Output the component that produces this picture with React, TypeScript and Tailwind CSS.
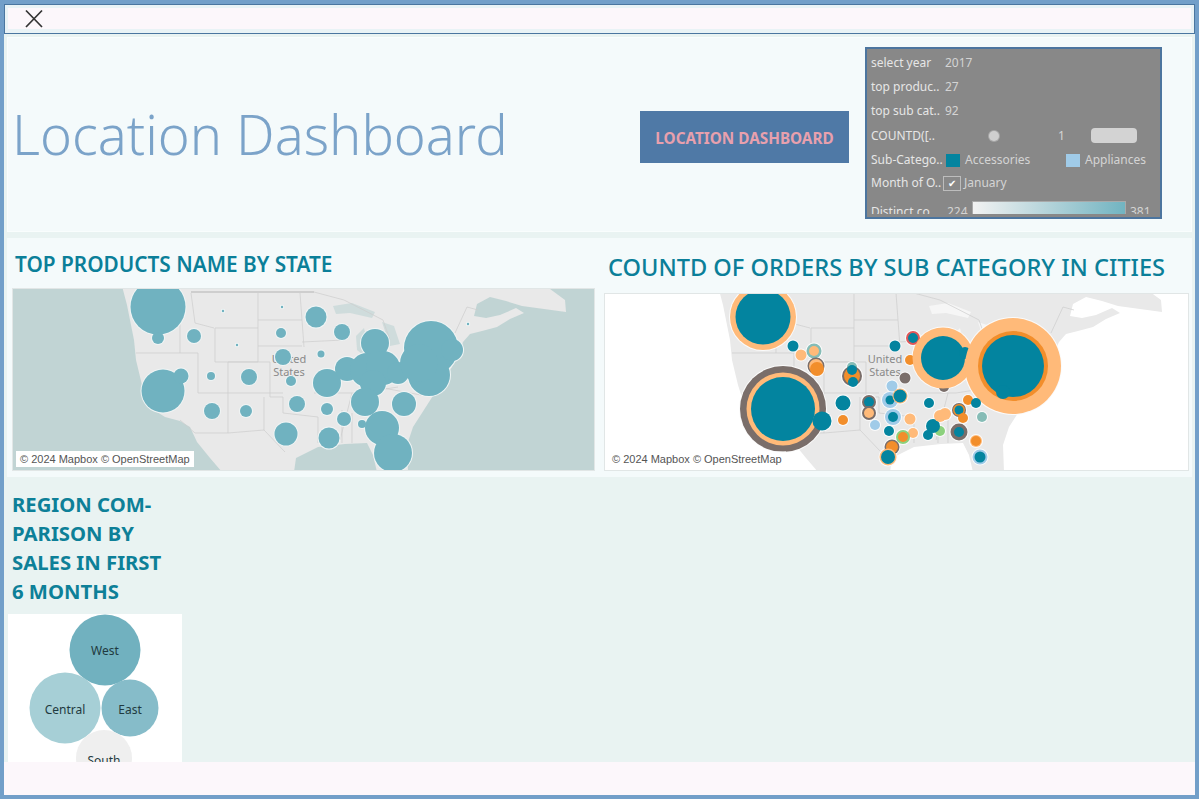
const teal = "#03849f";
const peach = "#ffba79";
const orange = "#f28e2b";
const grey = "#7a6e6a";
const sky = "#a0cbe8";
const sage = "#86bcb6";
const green = "#8cd17d";
const red = "#e15759";

type Dot = [number, number, number, string?];

// screen coordinates, the viewBox of each map is the map's own place on the page
const stateDots: Dot[] = [
  [158, 307, 27.5], [158, 338, 6], [194, 336, 7], [223, 311, 1.2], [282, 307, 1.2], [316, 317, 10.5],
  [342, 332, 8], [281, 333, 5], [237, 345, 1.2], [283, 357, 8], [321, 354, 3.5], [468, 324, 1.2],
  [163, 391, 21.5], [181, 376, 7.5], [211, 376, 4], [249, 377, 8], [291, 381, 5], [327, 383, 14],
  [347, 369, 12], [375, 343, 14], [367, 370, 17], [383, 368, 17], [373, 383, 13], [398, 373, 11],
  [365, 402, 14], [404, 404, 12], [212, 411, 8], [246, 411, 6], [297, 404, 8], [327, 409, 6],
  [344, 419, 7], [362, 424, 4], [286, 434, 11.5], [329, 438, 10.5], [382, 428, 17], [393, 453, 19],
  [431, 348, 27], [429, 375, 21], [452, 350, 11], [419, 363, 19],
];

const cityDots: Dot[] = [
  [763, 317, 33, peach], [763, 317, 27.5, teal],
  [783, 409, 43, grey], [783, 409, 36.5, peach], [783, 409, 32, teal], [822, 421, 9.5, teal],
  [793, 346, 5.5, teal], [801, 355, 5.5, peach], [814, 351, 7.5, sage], [814, 351, 5, peach],
  [816, 366, 8.5, grey], [816, 366, 7, peach], [817, 369, 7, orange],
  [852, 367, 5, sage], [852, 376, 10, grey], [852, 376, 8, orange], [852, 370, 5, teal], [853, 382, 5, teal],
  [895, 346, 5.5, teal], [913, 338, 7, red], [913, 338, 5, teal], [910, 360, 5, orange], [905, 378, 5.5, grey],
  [944, 387, 5, grey], [943, 358, 30.5, peach], [943, 358, 22, teal], [965, 353, 6, teal],
  [1013, 366, 48, peach], [1013, 366, 35, orange], [1013, 366, 31, teal], [1003, 392, 7, teal],
  [892, 386, 5.5, sky], [890, 400, 8, sky], [890, 400, 4.5, teal], [900, 396, 7.5, peach], [900, 396, 6.5, teal],
  [843, 403, 7.5, teal], [843, 420, 5, orange],
  [869, 402, 7, grey], [869, 402, 5, teal], [869, 413, 7, grey], [869, 413, 5, peach],
  [893, 417, 8, sky], [893, 417, 5, teal], [875, 425, 5, sky], [889, 431, 5, teal],
  [910, 419, 5.5, peach], [913, 433, 5, peach], [903, 437, 7, green], [903, 437, 5, orange],
  [892, 447, 7.5, grey], [892, 447, 6, orange], [888, 457, 8.5, peach], [888, 457, 7, teal],
  [929, 403, 5, teal], [940, 431, 5, green], [933, 426, 7, teal], [928, 435, 5, teal],
  [940, 416, 6, peach], [945, 414, 6, peach], [959, 410, 7, grey], [959, 410, 6, orange], [959, 410, 4.5, teal],
  [963, 418, 5, orange], [959, 432, 8.5, grey], [959, 432, 5, teal], [968, 400, 5, orange], [976, 403, 5, teal],
  [982, 417, 5, sage], [976, 441, 6, peach], [976, 441, 5, orange], [980, 457, 7.5, sky], [980, 457, 5.5, teal],
];

const landPath =
  "M122 286 L127 305 L134 340 L136 360 L142 385 L149 407 L165 417 L180 421 L190 427 L197 442 L210 458 L222 472 L294 472 L296 458 L318 447 L345 444 L367 443 L373 455 L377 472 L408 472 L407 445 L413 427 L429 402 L440 385 L452 367 L463 342 L470 334 L482 331 L497 327 L510 319 L524 313 L516 308 L500 315 L486 318 L474 316 L477 304 L490 297 L506 301 L522 306 L566 312 L565 300 L546 286 Z";

const stateLines =
  "M136 353 L198 353 M198 353 L198 393 M215 328 L258 328 L258 362 L215 362 L215 328 M228 362 L270 362 L270 397 M228 362 L228 433 M198 393 L283 393 M180 420 L195 433 L228 433 L264 430 L264 397 M258 320 L302 320 M258 346 L302 346 M258 293 L258 328 M300 293 L304 347 M270 397 L283 397 L283 413 L318 417 L318 443 M264 430 L285 452 M302 342 L344 340 M314 393 L360 393 L398 387 M352 393 L340 440 M342 410 L342 443 M352 413 L352 443 M191 293 L195 323 L214 328 M180 323 L180 353 M314 292 L344 300 L383 320 L390 340 M455 333 L467 307 L478 310 M383 388 L421 395";

// land and borders are the same on both maps, only shifted
function MapBase({ dx }: { dx: number }) {
  return (
    <g transform={`translate(${dx} 0)`}>
      <path d={landPath} fill="#e9e9e9" />
      <path
        d="M333 306 L352 303 L375 312 L372 318 L350 313 L336 314 Z M356 336 L364 328 L368 345 L362 354 L357 350 Z M382 322 L394 326 L400 344 L390 346 L386 334 Z"
        fill={dx === 0 ? "#cfdcdc" : "#f6f6f6"}
      />
      <path d="M191 292 L314 292" fill="none" stroke="#c4c4c4" strokeWidth="1.4" />
      <path d={stateLines} fill="none" stroke="#cdcdcd" strokeWidth="0.7" />
      <text x="289" y="363" textAnchor="middle" className="font-['Noto_Sans',sans-serif] text-[11px]" fill="#8a8a8a">United</text>
      <text x="289" y="376" textAnchor="middle" className="font-['Noto_Sans',sans-serif] text-[11px]" fill="#8a8a8a">States</text>
    </g>
  );
}

// halo goes under every dot first so that touching dots merge into one shape
function Dots({ dots, halo, fill }: { dots: Dot[]; halo: string; fill?: string }) {
  return (
    <>
      {dots.map(([x, y, r], i) => (
        <circle key={i} cx={x} cy={y} r={r + 1} fill={halo} />
      ))}
      {dots.map(([x, y, r, c], i) => (
        <circle key={i} cx={x} cy={y} r={r} fill={c ?? fill} />
      ))}
    </>
  );
}

function Attribution({ boxed }: { boxed: boolean }) {
  return (
    <div className={`absolute bottom-[3px] left-[3px] h-[16px] px-[4px] font-['Liberation_Sans',sans-serif] text-[11px] leading-[16px] text-[#555] whitespace-nowrap ${boxed ? "bg-white" : "bg-white/60"}`}>
      © 2024 Mapbox © OpenStreetMap
    </div>
  );
}

function FilterRow({ label, height, children }: { label: string; height: string; children: React.ReactNode }) {
  return (
    <div className={`flex items-center ${height}`}>
      <span className="w-[78px] shrink-0 pl-[4px] text-[#e6e6e6] whitespace-nowrap">{label}</span>
      {children}
    </div>
  );
}

function FilterPanel() {
  return (
    <div className="h-[172px] w-[297px] border-2 border-[#4c759f] bg-[#888888] pt-[2px] font-['Noto_Sans',sans-serif] text-[12px]">
      <div className="h-[163px] overflow-hidden text-[#d4d4d4]">
        <FilterRow label="select year" height="h-[24px]"><span>2017</span></FilterRow>
        <FilterRow label="top produc.." height="h-[24px]"><span>27</span></FilterRow>
        <FilterRow label="top sub cat.." height="h-[24px]"><span>92</span></FilterRow>
        <FilterRow label="COUNTD([.." height="h-[25px]">
          <span className="ml-[44px] h-[10px] w-[10px] rounded-full bg-[#cfcfcf] ring-1 ring-[#a8a8a8]" />
          <span className="ml-[59px]">1</span>
          <span className="ml-[26px] h-[15px] w-[46px] rounded-[4px] bg-[#d3d3d3]" />
        </FilterRow>
        <FilterRow label="Sub-Catego.." height="h-[24px]">
          <span className="ml-[1px] h-[13px] w-[14px] bg-[#03849f]" />
          <span className="ml-[5px] w-[101px]">Accessories</span>
          <span className="h-[13px] w-[14px] bg-[#a0cbe8]" />
          <span className="ml-[5px]">Appliances</span>
        </FilterRow>
        <FilterRow label="Month of O.." height="h-[22px]">
          <span className="-ml-[2px] flex h-[15px] w-[18px] items-center justify-center border border-[#bdbdbd] text-[10px] leading-none text-white">✔</span>
          <span className="ml-[3px]">January</span>
        </FilterRow>
        <div className="flex h-[33px] items-start leading-[16px]">
          <span className="w-[78px] shrink-0 pl-[4px] pt-[10px] text-[#e6e6e6] whitespace-nowrap">Distinct co..</span>
          <span className="ml-[2px] w-[25px] pt-[10px]">224</span>
          <span className="mt-[7px] h-[14px] w-[154px] border border-[#a9a9a9] bg-gradient-to-r from-[#f2f2f2] to-[#71b4c1]" />
          <span className="ml-[4px] pt-[10px]">381</span>
        </div>
      </div>
    </div>
  );
}

export default function App() {
  return (
    <div className="flex h-[799px] w-[1199px] flex-col overflow-hidden bg-[#729fc9] p-[4px]">
      <div className="flex h-[30px] shrink-0 items-stretch border border-[#4a76a0] bg-[#e9f3f6] px-[3px] pb-[4px] pt-[3px]">
        <div className="flex flex-1 items-center bg-[#fcf7fb] pl-[16px]">
          <svg width="20" height="20" viewBox="0 0 20 20" fill="none" stroke="#333" strokeWidth="1.7" aria-hidden>
            <path d="M2 1.5 L18 18 M18 1.5 L2 18" />
          </svg>
        </div>
      </div>

      <div className="flex flex-1 flex-col bg-[#e9f3f2]">
        <div className="mx-[3px] mt-[3px] flex h-[195px] shrink-0 items-center border border-[#f9fdfd] bg-[#f4fafb] pt-[5px]">
          <h1 className="mb-[5px] w-[632px] shrink-0 pl-[4px] font-['Noto_Sans',sans-serif] text-[54.2px] font-light leading-none text-[#7ba3c9] whitespace-nowrap">
            Location Dashboard
          </h1>
          <div className="flex h-[52px] w-[209px] shrink-0 items-center justify-center bg-[#4f79a6] pt-[3px] font-['Noto_Sans',sans-serif] text-[15.3px] font-bold text-[#e8a0ad]">
            LOCATION DASHBOARD
          </div>
          <div className="-mt-[8px] ml-[16px]">
            <FilterPanel />
          </div>
        </div>

        <div className="mx-[3px] mt-[6px] flex h-[239px] shrink-0 gap-[9px] bg-[#f4fafb] px-[5px]">
          <div className="w-[583px] shrink-0">
            <h2 className="flex h-[50px] items-center pl-[3px] pt-[4px] font-['Noto_Sans',sans-serif] text-[20.8px] font-semibold text-[#0b7f99] whitespace-nowrap">
              TOP PRODUCTS NAME BY STATE
            </h2>
            <div className="relative h-[183px] overflow-hidden border border-[#e1e6e6] bg-[#c1d4d4]">
              <svg className="block h-full w-full" viewBox="13 289 581 181" aria-hidden>
                <MapBase dx={0} />
                <Dots dots={stateDots} halo="#f0f5f5" fill="#70b2c0" />
              </svg>
              <Attribution boxed />
            </div>
          </div>
          <div className="w-[585px] shrink-0">
            <h2 className="flex h-[55px] items-center pl-[4px] pt-[5px] font-['Noto_Sans',sans-serif] text-[23.6px] font-medium text-[#0b7f99] whitespace-nowrap">
              COUNTD OF ORDERS BY SUB CATEGORY IN CITIES
            </h2>
            <div className="relative h-[178px] overflow-hidden border border-[#e1e6e6] bg-white">
              <svg className="block h-full w-full" viewBox="605 294 583 176" aria-hidden>
                <MapBase dx={596} />
                <text x="870" y="479" textAnchor="middle" className="font-['Noto_Sans',sans-serif] text-[11px]" fill="#8a8a8a">Mexico</text>
                <Dots dots={cityDots} halo="#fbfbfb" />
              </svg>
              <Attribution boxed={false} />
            </div>
          </div>
        </div>

        <div className="mt-[2px] h-[283px] shrink-0 overflow-hidden">
          <h2 className="w-[170px] pl-[8px] pt-[11px] font-['Noto_Sans',sans-serif] text-[20.3px] font-bold leading-[29px] text-[#0d8098]">
            REGION COM-
            <br />
            PARISON BY
            <br />
            SALES IN FIRST
            <br />
            6 MONTHS
          </h2>
          <div className="ml-[4px] mt-[8px] h-[148px] w-[174px] overflow-hidden bg-white">
            <svg className="block" width="174" height="148" viewBox="8 614 174 148" aria-hidden>
              <circle cx="105" cy="650" r="35.5" fill="#71b1bf" />
              <circle cx="65" cy="708" r="35.5" fill="#a6cfd6" />
              <circle cx="130" cy="708" r="28.5" fill="#86bcc9" />
              <circle cx="104" cy="758" r="28" fill="#efefef" />
              <g className="font-['Noto_Sans',sans-serif] text-[12px]" fill="#1f3a40" textAnchor="middle">
                <text x="105" y="655">West</text>
                <text x="65" y="714">Central</text>
                <text x="130" y="714">East</text>
                <text x="104" y="765">South</text>
              </g>
            </svg>
          </div>
        </div>

        <div className="flex-1 bg-[#fcf7fb]" />
      </div>
    </div>
  );
}
